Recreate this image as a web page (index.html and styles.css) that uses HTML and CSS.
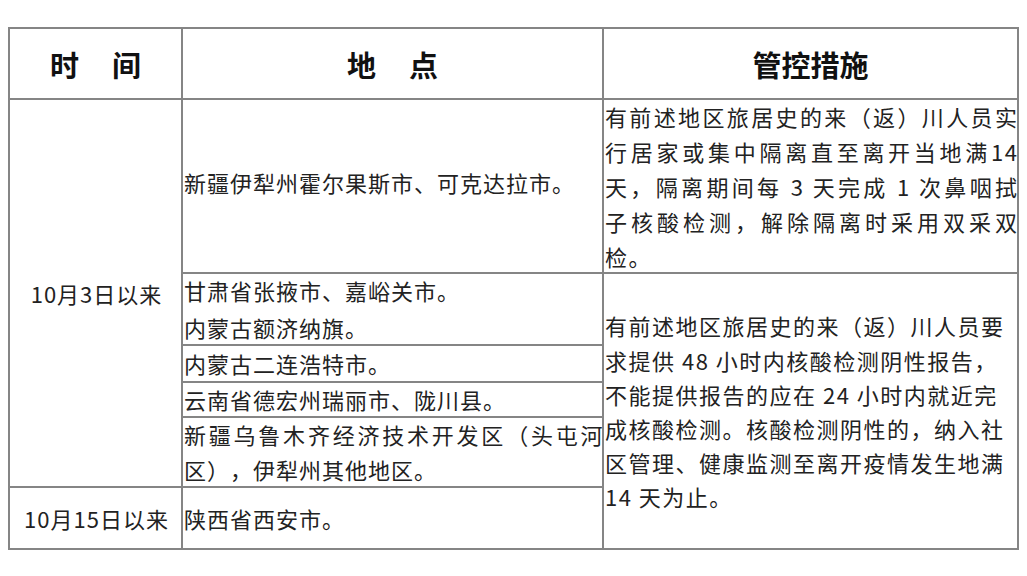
FILE: index.html
```html
<!DOCTYPE html>
<html lang="zh-CN">
<head>
<meta charset="utf-8">
<title>管控措施</title>
<link rel="stylesheet" href="styles.css">
</head>
<body>
<div class="sheet">
  <div class="cell head"><span class="gap">时</span>间</div>
  <div class="cell head"><span class="gap">地</span>点</div>
  <div class="cell head">管控措施</div>

  <div class="cell date span5">10月3日以来</div>
  <div class="cell place first">新疆伊犁州霍尔果斯市、可克达拉市。</div>
  <div class="cell measure m1">
    <div class="j">有前述地区旅居史的来（返）川人员实</div>
    <div class="j">行居家或集中隔离直至离开当地满14</div>
    <div class="j">天，隔离期间每 3 天完成 1 次鼻咽拭</div>
    <div class="j">子核酸检测，解除隔离时采用双采双</div>
    <div>检。</div>
  </div>

  <div class="cell place">
    <div>甘肃省张掖市、嘉峪关市。</div>
    <div>内蒙古额济纳旗。</div>
  </div>
  <div class="cell measure m2 span5">
    <div>有前述地区旅居史的来（返）川人员要</div>
    <div>求提供 48 小时内核酸检测阴性报告，</div>
    <div>不能提供报告的应在 24 小时内就近完</div>
    <div>成核酸检测。核酸检测阴性的，纳入社</div>
    <div>区管理、健康监测至离开疫情发生地满</div>
    <div>14 天为止。</div>
  </div>

  <div class="cell place">内蒙古二连浩特市。</div>
  <div class="cell place">云南省德宏州瑞丽市、陇川县。</div>
  <div class="cell place tight">
    <div class="j">新疆乌鲁木齐经济技术开发区（头屯河</div>
    <div>区），伊犁州其他地区。</div>
  </div>

  <div class="cell date">10月15日以来</div>
  <div class="cell place">陕西省西安市。</div>
</div>
</body>
</html>
```

FILE: styles.css
```css
* {
  box-sizing: border-box;
}

body {
  margin: 0;
  background: #ffffff;
  font-family: "Noto Sans CJK SC", "Noto Sans", sans-serif;
  color: #222222;
  text-spacing-trim: space-all;
}

.sheet {
  display: grid;
  grid-template-columns: 173px 421px 415px;
  grid-template-rows: 71px 174px 72px 37px 35px 70px 62px;
  width: max-content;
  margin: 27px 0 0 8px;
  border-top: 2px solid #858585;
  border-left: 2px solid #858585;
}

.cell {
  display: flex;
  flex-direction: column;
  justify-content: center;
  border-right: 2px solid #858585;
  border-bottom: 2px solid #858585;
  white-space: nowrap;
}

.head {
  flex-direction: row;
  align-items: center;
  justify-content: center;
  font-size: 29px;
  font-weight: 700;
  color: #111111;
}

.gap {
  margin-right: 33px;
}

.span5 {
  grid-row: span 5;
}

.date {
  align-items: center;
  font-size: 22px;
  letter-spacing: 1px;
  padding-left: 2px;
}

.place {
  font-size: 22px;
  letter-spacing: 1px;
  line-height: 37px;
  padding-left: 1px;
}

.place.first {
  padding-bottom: 8px;
}

.place.tight {
  line-height: 35px;
}

.measure {
  font-size: 22px;
  letter-spacing: 1.5px;
  padding-left: 1px;
}

.m1 {
  line-height: 35px;
}

.m2 {
  line-height: 34.2px;
}

.j {
  text-align: justify;
  text-align-last: justify;
  margin-right: -1.5px;
}
```
